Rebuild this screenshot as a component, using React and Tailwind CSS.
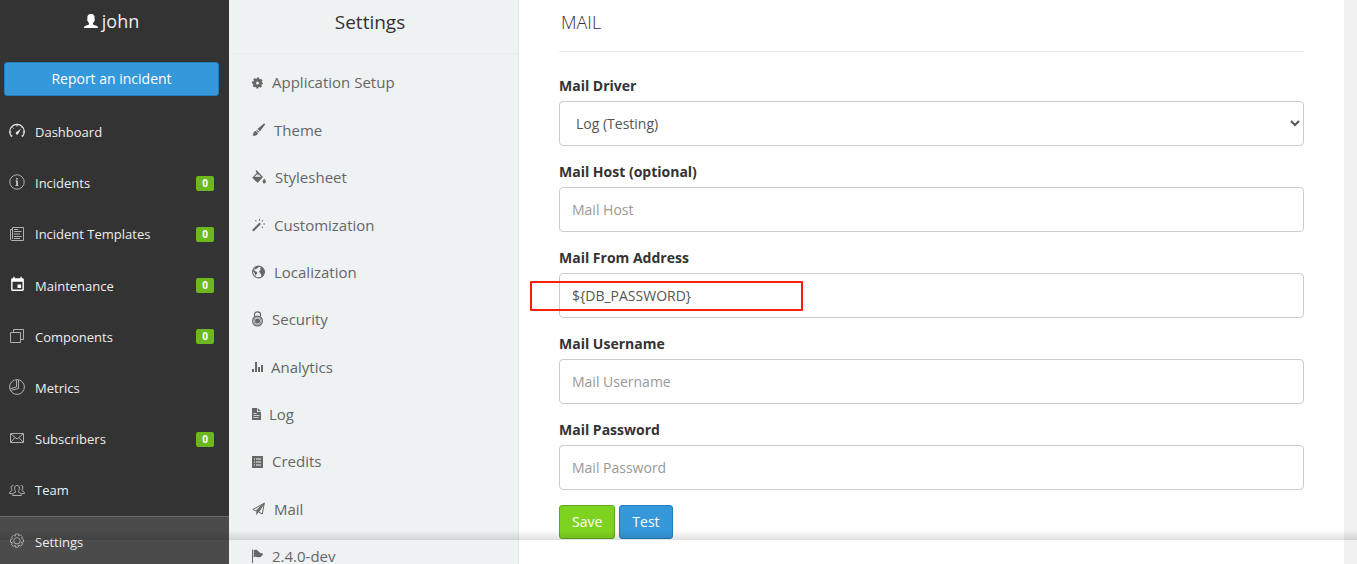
import React from "react";
import { MdEvent } from "react-icons/md";

const line = { fill: "none", stroke: "currentColor", strokeWidth: 1 };

const PersonIcon = () => (
  <svg className="h-[14px] w-[14px]" viewBox="0 0 14 14" fill="currentColor" aria-hidden="true">
    <path d="M0 14c0-1.4.5-1.9 1.7-2.3 2-.6 3.3-.9 3.3-2 0-.8-.6-1.2-1-2.3-.4-.1-.7-.5-.8-1.2-.1-.6 0-1 .3-1.2C3 2 4 0 7 0s4 2 3.500 5c.3.200.4.600.3 1.200-.1.700-.4 1.100-.8 1.200-.4 1.100-1 1.500-1 2.300 0 1.100 1.300 1.400 3.300 2C13.500 12.100 14 12.600 14 14z" />
  </svg>
);

const DashIcon = () => (
  <svg className="h-4 w-4" viewBox="0 0 16 16" aria-hidden="true">
    <path {...line} strokeWidth="1.200" d="M2.500 13.500A7.300 7.300 0 1 1 13.500 13.500M2.500 13.500l.8-1M13.500 13.500l-.8-1" />
    <path {...line} d="M8 2v1.500M3.500 4.500l1 1M12.500 4.500l-.6.6M1 9h1.300M13.700 9H15" />
    <path fill="currentColor" d="M12 5.800 9.200 10.700a1.300 1.300 0 1 1-1.700-1.700z" />
  </svg>
);
const InfoIcon = () => (
  <svg className="h-4 w-4" viewBox="0 0 16 16" aria-hidden="true">
    <circle {...line} cx="8" cy="8" r="7.200" />
    <path fill="#eeeeee" d="M7.300 4h1.400v1.400H7.300zM6.500 6.500h2.200V11h.8v.8H6.500V11h.8V7.300h-.8z" />
  </svg>
);
const PaperIcon = () => (
  <svg className="h-4 w-4" viewBox="0 0 16 16" aria-hidden="true">
    <path {...line} d="M3.500 1.500h11v13h-12a1.500 1.500 0 0 1-1-1.500V3.500h2M3.500 1.500v11.500" />
    <path {...line} d="M5 3.500h4M5 5.500h7.500M5 8h6M5 10.500h7.500M5 12.500h6" />
  </svg>
);
const CalendarIcon = () => <MdEvent className="h-[17px] w-[17px] text-white" aria-hidden="true" />;
const CopyIcon = () => (
  <svg className="h-4 w-4" viewBox="0 0 16 16" aria-hidden="true">
    <path {...line} d="M1.500 4.500h10v10h-10zM4.500 4.500v-3h10v10h-3" />
  </svg>
);
const PieIcon = () => (
  <svg className="h-4 w-4" viewBox="0 0 16 16" aria-hidden="true">
    <circle {...line} cx="8" cy="8" r="7.400" />
    <path {...line} d="M9.500.8v8.700l-7.300 1.800M7.500 1v7L1.300 9.800" />
  </svg>
);
const EnvelopeIcon = () => (
  <svg className="h-4 w-4" viewBox="0 0 16 16" aria-hidden="true">
    <path {...line} d="M1.500 3.500h13v9h-13zM2 4l6 5 6-5M2 12l4-4.500M14 12l-4-4.500" />
  </svg>
);
const PeopleIcon = () => (
  <svg className="h-4 w-4" viewBox="0 0 16 16" aria-hidden="true">
    <path {...line} d="M3.700 13.500c0-2 .5-2.500 2.800-3.200.4-1-.9-1.700-.9-4.200 0-3.500 4.800-3.500 4.800 0 0 2.500-1.300 3.200-.9 4.200 2.300.7 2.800 1.200 2.800 3.200z" />
    <path {...line} d="M4.500 3.700C2.700 3 1.800 4.500 2.200 6c.2 1.500 1 2 .7 2.800C1.200 9.500.6 9.700.5 11.500h3M11.500 3.700c1.800-.7 2.700.8 2.300 2.300-.2 1.500-1 2-.7 2.800 1.700.7 2.300.9 2.400 2.700h-3" />
  </svg>
);
const GearIcon = () => (
  <svg className="h-4 w-4" viewBox="0 0 16 16" aria-hidden="true">
    <path
      {...line}
      strokeLinejoin="round"
      d="M6.600 1h2.800l.4 1.800 1.600-1 2 2-1 1.600 1.900.5.200.7v2.300l-2 .5 1 1.700-2 2-1.700-1-.5 1.900-.7.300H6.600l-.4-1.900-1.700 1-2-2 1-1.700-2-.5V6.400l2-.5-1-1.700 2-2 1.700 1z"
    />
    <circle {...line} cx="8" cy="7.800" r="3.200" />
  </svg>
);

const NAV = [
  { label: "Dashboard", icon: DashIcon, bright: true },
  { label: "Incidents", icon: InfoIcon, count: 0 },
  { label: "Incident Templates", icon: PaperIcon, count: 0 },
  { label: "Maintenance", icon: CalendarIcon, count: 0 },
  { label: "Components", icon: CopyIcon, count: 0 },
  { label: "Metrics", icon: PieIcon },
  { label: "Subscribers", icon: EnvelopeIcon, count: 0 },
  { label: "Team", icon: PeopleIcon },
  { label: "Settings", icon: GearIcon, active: true },
];

const MENU = [
  {
    label: "Application Setup",
    icon: (
      <svg className="h-[14px] w-[11px]" viewBox="0 0 11 14" aria-hidden="true">
        <circle cx="5.500" cy="7" r="3" fill="none" stroke="currentColor" strokeWidth="3" />
        <circle cx="5.500" cy="7" r="4.700" fill="none" stroke="currentColor" strokeWidth="1.700" strokeDasharray="2.100 1.590" strokeDashoffset="1" />
      </svg>
    ),
  },
  {
    label: "Theme",
    icon: (
      <svg className="h-[14px] w-[13px]" viewBox="0 0 13 14" fill="currentColor" aria-hidden="true">
        <path d="M12.800.7c.4.400.2.900-.1 1.300L8 8.300 5.500 6.100 11.600.8c.4-.3.900-.4 1.200-.1zM5 6.700l2.300 2.200-.7.800-2.400-2.200zM3.700 7.900l2.200 2.200c-.1 2.200-2.500 3.300-5.700 2.500C1.700 11.700.7 8.300 3.700 7.900z" />
      </svg>
    ),
  },
  {
    label: "Stylesheet",
    icon: (
      <svg className="h-[14px] w-[14px]" viewBox="0 0 14 14" fill="currentColor" aria-hidden="true">
        <path fillRule="evenodd" d="M3.500.7 4.700.3l6.300 6.700-5 5.500H5.200L.2 7.700 4.700 3zM5.700 3.700 2.500 6.700h6.500L6.500 4v1.700h-.8z" />
        <path d="M12.200 8.500c1 1.400 1.700 2.300 1.700 3.300a1.650 1.650 0 0 1-3.300 0c0-1 .7-1.900 1.600-3.300z" />
      </svg>
    ),
  },
  {
    label: "Customization",
    icon: (
      <svg className="h-[14px] w-[13px]" viewBox="0 0 13 14" fill="currentColor" aria-hidden="true">
        <path d="M7.500 4.500 9 6 1.600 13.400.1 11.900zM7 1h1v1.800H7zM3 2.500l.8-.6 1 1.100-.8.700zM10.500 2l.8.6-1 1.200-.8-.6zM11.200 5.500H13v1h-1.800zM9.500 9l.8-.6 1 1.200-.8.600z" />
      </svg>
    ),
  },
  {
    label: "Localization",
    icon: (
      <svg className="h-[14px] w-[13px]" viewBox="0 0 13 14" aria-hidden="true">
        <circle cx="6.500" cy="7" r="5.900" fill="none" stroke="currentColor" strokeWidth="1.100" />
        <path fill="currentColor" d="M1 5.200c.8-.3 1.700.2 2.300 1 .8.300 2 .5 2 1.500-.2 1.200-1.300 1.500-1.300 3-.7.300-.9-.9-1.200-1.900C2.500 7.500 1.200 7 1 5.200zM4.500 1.600c1.600-.4 2.300.2 2 1-.5 1-1.700.7-2.200 1.500-.6.600-1.600.3-2-.3zM8 4c.3-1.200 1.300-1.600 2.600-1.300l1.600 2.800.3 2.500-1.800 3.300c-.9.900-1.600.5-1.500-.8 0-1-.2-1.800-1-2.300C6.500 7.200 7 5 9 5z" />
      </svg>
    ),
  },
  {
    label: "Security",
    icon: (
      <svg className="h-[16px] w-[11px]" viewBox="0 0 11 16" aria-hidden="true">
        <path fill="none" stroke="currentColor" strokeWidth="1.200" d="M2.500 5.700V3.500c0-3.600 6-3.600 6 0v2.200" />
        <circle cx="5.500" cy="10" r="4.900" fill="none" stroke="currentColor" strokeWidth="1.200" />
        <circle cx="5.500" cy="10" r="3.500" fill="none" stroke="currentColor" strokeWidth=".7" />
        <circle cx="5.500" cy="10" r="2.500" fill="currentColor" />
      </svg>
    ),
  },
  {
    label: "Analytics",
    tight: true,
    icon: (
      <svg className="h-[14px] w-[11px]" viewBox="0 0 11 14" fill="currentColor" aria-hidden="true">
        <path d="M0 9h2v3H0zM3 2h2v10H3zM6 7h2v5H6zM9 5h2v7H9z" />
      </svg>
    ),
  },
  {
    label: "Log",
    tight: true,
    icon: (
      <svg className="h-[14px] w-[9px]" viewBox="0 0 9 14" fill="currentColor" aria-hidden="true">
        <path fillRule="evenodd" d="M0 1h5v4h4v8H0zM5.800 1 9 4.200H5.800zM1.500 6v.8h3V6zM1.500 8v.8h6V8zM1.500 10v.8h5V10z" />
      </svg>
    ),
  },
  {
    label: "Credits",
    icon: (
      <svg className="h-[14px] w-[11px]" viewBox="0 0 11 14" fill="currentColor" aria-hidden="true">
        <path fillRule="evenodd" d="M0 1h11v12H0zM2 3.600v.8h1v-.8zM4 3.600v.8h5v-.8zM2 6.600v.8h1v-.8zM4 6.600v.8h5v-.8zM2 9.600v.8h1v-.8zM4 9.600v.8h5v-.8z" />
      </svg>
    ),
  },
  {
    label: "Mail",
    icon: (
      <svg className="h-[14px] w-[13px]" viewBox="0 0 13 14" aria-hidden="true">
        <path fill="none" stroke="currentColor" strokeLinejoin="round" d="M12.300 1.200.8 7.500l3 1.300 8.500-7.600-2 10.800-3.700-2z" />
        <path fill="currentColor" d="M12 1.500 4.300 8.900v4.400l2-2.800z" />
      </svg>
    ),
  },
  {
    label: "2.4.0-dev",
    icon: (
      <svg className="h-[14px] w-[11px]" viewBox="0 0 11 14" fill="currentColor" aria-hidden="true">
        <path d="M0 .5h1V14H0zM1.700 1.200c2-1 3.800-.5 4.600 1 .8 1.300 2.400 2.200 4.900 2.200-1 3-3.300 4.300-5.300 3.900-1.500-.8-2.700-.8-4.200 0z" />
      </svg>
    ),
  },
];

const FIELD =
  "block h-[45px] w-full rounded-[4px] border border-[#cccccc] bg-white px-3 text-sm text-[#555555] placeholder:text-[#999999]";
const LABEL = "mb-[5px] block text-sm leading-[21px] font-bold text-[#333333]";

function Field({ id, label, marked, ...rest }) {
  return (
    <div className="mb-[15px]">
      <label htmlFor={id} className={LABEL}>{label}</label>
      <div className="relative">
        <input id={id} className={FIELD} {...rest} />
        {marked && (
          <div className="pointer-events-none absolute top-2 -left-[29px] h-[30px] w-[273px] rounded-[1px] border-2 border-[#f9200a]" />
        )}
      </div>
    </div>
  );
}

export default function App() {
  return (
    <div className="relative flex h-screen overflow-hidden bg-[#f0f0f0] font-['Open_Sans','Noto_Sans',sans-serif]">
      <aside className="w-[229px] shrink-0 bg-[#333333] text-[#eeeeee]">
        <div className="flex h-[62px] items-start justify-center gap-1 pt-2 pr-[6px] text-lg leading-[26px]">
          <span className="pt-[6px] text-white"><PersonIcon /></span>
          <span>john</span>
        </div>
        <div className="pr-[10px] pl-1">
          <button className="block h-[34px] w-full rounded-[3px] border border-[#217dbb] bg-[#3498db] text-sm text-white">
            Report an incident
          </button>
        </div>
        <nav className="mt-[10px] grid h-[461px] auto-rows-fr">
          {NAV.map(({ label, icon: Icon, count, bright, active }) => (
            <a
              key={label}
              href="#"
              className={`flex items-center border-t pr-[15px] pl-[9px] text-[13px] ${active ? "border-[#6b6b6b] bg-[#4b4b4b]" : "border-transparent"}`}
            >
              <span className={`flex w-[26px] pb-[2px] ${bright ? "text-[#eeeeee]" : "text-[#b0b0b0]"}`}><Icon /></span>
              <span className="grow pt-[1px]">{label}</span>
              {count !== undefined && (
                <span className="h-[15px] w-[18px] rounded-[2px] bg-[#6db81c] text-center text-[10px] leading-[15px] font-bold text-white">{count}</span>
              )}
            </a>
          ))}
        </nav>
      </aside>

      <section className="w-[290px] shrink-0 border-r border-[#e0e7ea] bg-[#eef2f3]">
        <h1 className="h-[54px] border-b border-[#e7ebed] pt-2 pr-[7px] text-center text-[19px] leading-[28px] text-[#333333]">Settings</h1>
        <nav className="mt-[5px] grid h-[521px] auto-rows-fr">
          {MENU.map(({ label, icon, tight }) => (
            <a key={label} href="#" className={`flex items-center pl-[23px] text-[15px] text-[#666666] ${tight ? "gap-2" : "gap-[9px]"}`}>
              {icon}
              <span>{label}</span>
            </a>
          ))}
        </nav>
      </section>

      <main className="mr-[13px] min-w-0 grow bg-white px-10">
        <h2 className="mb-[23px] h-[52px] border-b border-[#e8e8e8] pt-2 pl-[2px] text-lg leading-[28px] font-light text-[#333333]">MAIL</h2>
        <form onSubmit={(e) => e.preventDefault()}>
          <div className="mb-[15px]">
            <label htmlFor="driver" className={LABEL}>Mail Driver</label>
            <select id="driver" className={FIELD}>
              <option>Log (Testing)</option>
            </select>
          </div>
          <Field id="host" label="Mail Host (optional)" placeholder="Mail Host" />
          <Field id="from" label="Mail From Address" defaultValue="${DB_PASSWORD}" marked />
          <Field id="username" label="Mail Username" placeholder="Mail Username" />
          <Field id="password" label="Mail Password" placeholder="Mail Password" type="password" />
          <div className="flex gap-1">
            <button type="submit" className="h-[34px] rounded-[3px] border border-[#62a61a] bg-[#7ed321] px-3 text-sm text-white">Save</button>
            <button type="button" className="h-[34px] rounded-[3px] border border-[#217dbb] bg-[#3498db] px-3 text-sm text-white">Test</button>
          </div>
        </form>
      </main>

      <div className="pointer-events-none absolute inset-x-0 bottom-6 h-[10px] bg-linear-to-t from-black/12 to-transparent" />
    </div>
  );
}
